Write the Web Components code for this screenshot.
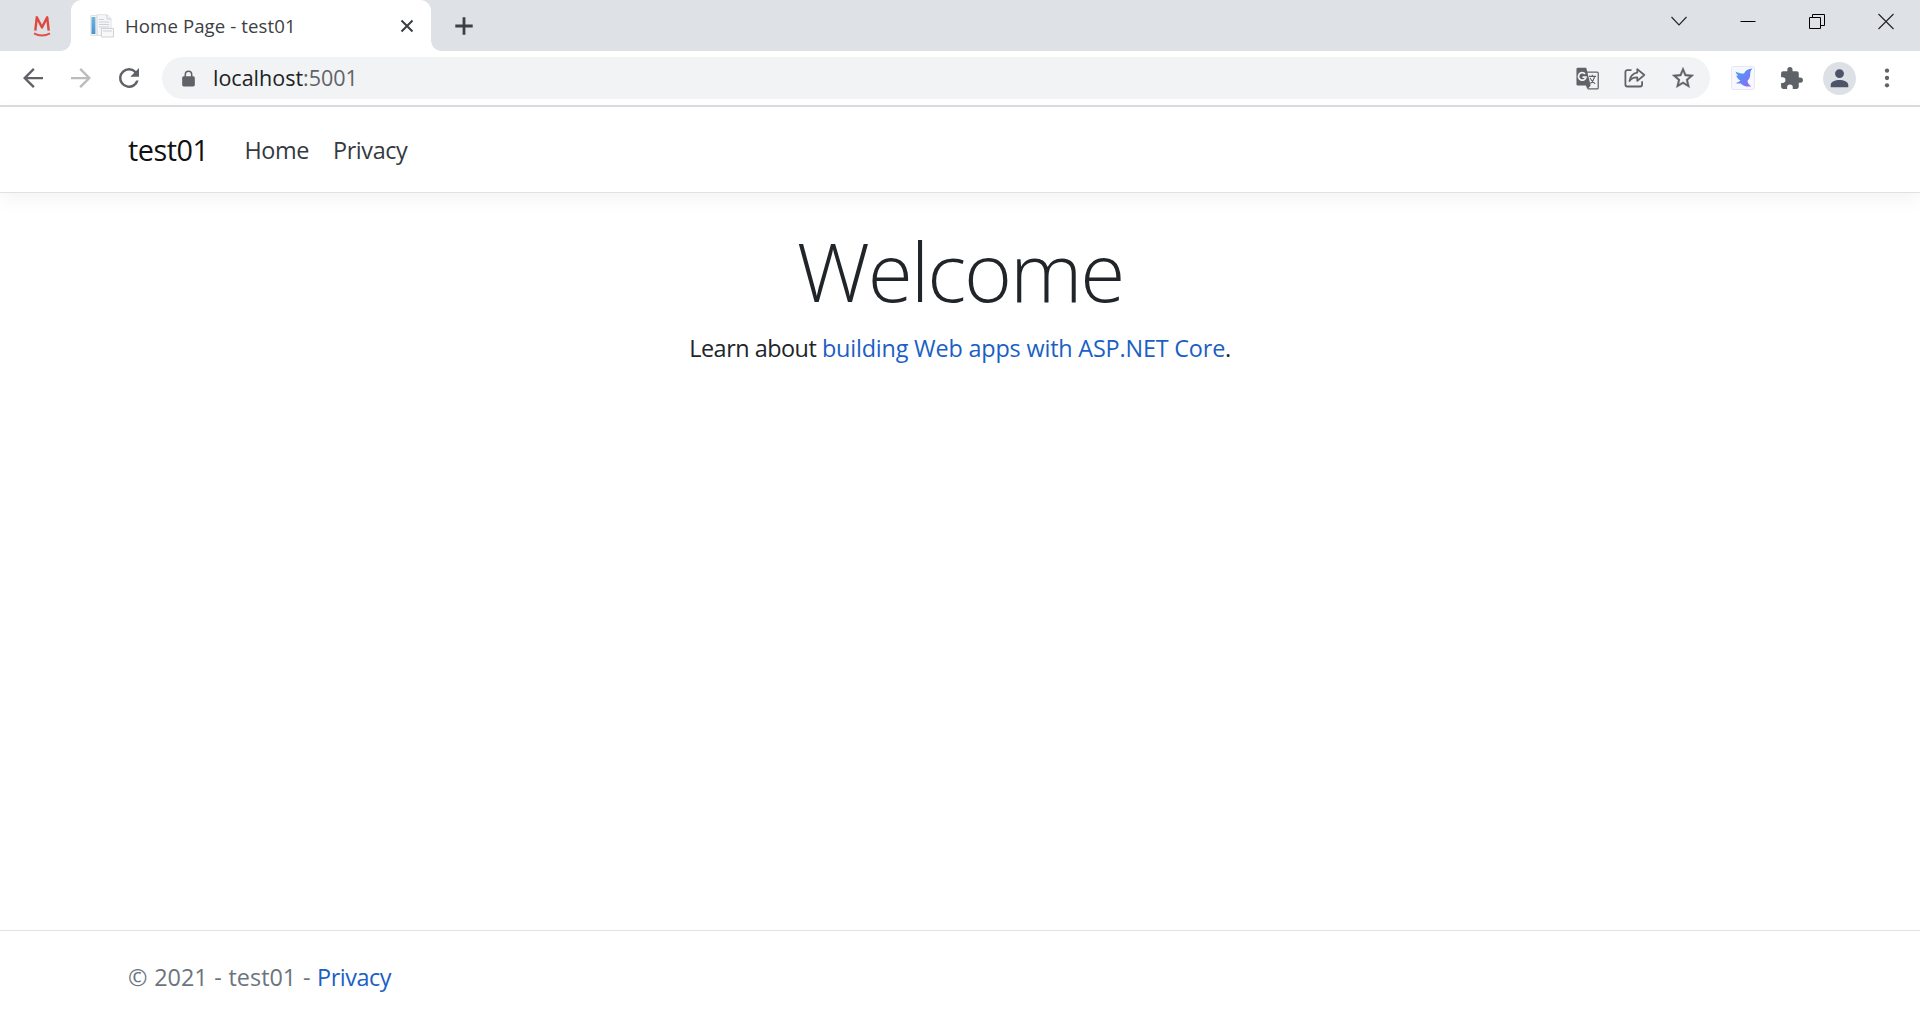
<!DOCTYPE html>
<html lang="en">
<head>
  <meta charset="utf-8">
  <title>Home Page - test01</title>
  <style>
    body {
      margin: 0;
      height: 1020px;
      overflow: hidden;
      display: flex;
      flex-direction: column;
      background: #fff;
      font-family: "Open Sans", "Noto Sans", sans-serif;
      color: #212529;
    }
  </style>
</head>
<body>
  <tab-strip>
    <browser-tab>Home Page - test01</browser-tab>
  </tab-strip>
  <tool-bar>
    <span slot="host">localhost</span>
    <span slot="port">:5001</span>
  </tool-bar>
  <site-header brand="test01">
    <nav-link>Home</nav-link>
    <nav-link>Privacy</nav-link>
  </site-header>
  <welcome-panel heading="Welcome">Learn about <text-link>building Web apps with ASP.NET Core</text-link>.</welcome-panel>
  <site-footer>© 2021 - test01 - <text-link tight>Privacy</text-link></site-footer>

  <script>
    const ICONS = {
      back: '<path d="M20 11.1H7.6l5.7-5.7L12 4l-8 8 8 8 1.4-1.4-5.8-5.7H20z"/>',
      forward: '<path d="M4 11.1h12.4l-5.7-5.7L12 4l8 8-8 8-1.4-1.4 5.8-5.7H4z"/>',
      reload: '<path d="M17.65 6.35A7.96 7.96 0 0 0 12 4a8 8 0 1 0 7.73 10h-2.08A6 6 0 1 1 12 6c1.66 0 3.14.69 4.22 1.78L13 11h7V4z"/>',
      lock: '<path d="M18 9h-1V7A5 5 0 0 0 7 7v2H6a2 2 0 0 0-2 2v9a2 2 0 0 0 2 2h12a2 2 0 0 0 2-2v-9a2 2 0 0 0-2-2zM8.9 9V7a3.1 3.1 0 0 1 6.2 0v2z"/>',
      translate: '<path d="M11 5.8H21.3a1 1 0 0 1 1 1V21a1 1 0 0 1-1 1H12.5" fill="none" stroke="currentColor" stroke-width="1.2"/><path d="M2.6 1.6h8.2l4.2 17H2.6A1.2 1.2 0 0 1 1.4 17.4V2.8A1.2 1.2 0 0 1 2.6 1.6zM10.4 18.6H15L12 22.4z"/><path d="M9.6 7.6A3.6 3.6 0 1 0 10.5 10.6H7.2" fill="none" stroke="#f1f3f4" stroke-width="1.7"/><path d="M13.4 10h6.8M16.6 8.4V10M18.8 10.2c-.6 3-2.2 5.2-4 6.6M14.4 11.4c1 2.3 2.8 4.3 5 5.6" fill="none" stroke="currentColor" stroke-width="1.1"/>',
      share: '<path d="M8.5 4.1H4.4a2 2 0 0 0-2 2v12.4a2 2 0 0 0 2 2h12.7a2 2 0 0 0 2-2v-3.2" fill="none" stroke="currentColor" stroke-width="1.8"/><path d="M14.3 3.1l7 5.9-7 5.9v-3.5c-3.4-.1-5.9 1-7.8 3.7.6-4.2 2.9-7.6 7.8-8.4z" fill="none" stroke="currentColor" stroke-width="1.8" stroke-linejoin="round"/>',
      star: '<path stroke="currentColor" stroke-width=".3" d="M22 9.24l-7.19-.62L12 2 9.19 8.63 2 9.24l5.46 4.73L5.82 21 12 17.27 18.18 21l-1.63-7.03zM12 15.4l-3.76 2.27 1-4.28-3.32-2.88 4.38-.38L12 6.1l1.71 4.04 4.38.38-3.32 2.88 1 4.28z"/>',
      puzzle: '<path d="M20.5 11H19V7a2 2 0 0 0-2-2h-4V3.5a2.5 2.5 0 0 0-5 0V5H4a2 2 0 0 0-2 2v3.8h1.5a2.7 2.7 0 0 1 0 5.4H2V20a2 2 0 0 0 2 2h3.8v-1.5a2.7 2.7 0 0 1 5.4 0V22H17a2 2 0 0 0 2-2v-4h1.5a2.5 2.5 0 0 0 0-5z"/>',
      bird: '<defs><linearGradient id="g" x1="0" y1="0" x2="1" y2="1"><stop offset="0" stop-color="#45a6f8"/><stop offset=".5" stop-color="#6785f5"/><stop offset="1" stop-color="#9a63f2"/></linearGradient></defs><rect x=".5" y=".5" width="23" height="23" rx="2" fill="#f7f7fe" stroke="#e6e7f6"/><path fill="url(#g)" d="M4.6 5.4C7.5 7 10.4 7.7 13 7.5 14.2 4.6 17 2.8 21.4 2.6 19.6 4.4 19.2 6.4 19.2 8.6c0 2.8-1 4.8-2.6 6-.3 2 1 4.3 3.6 5.8-4.6.6-8.2-.4-10.8-3.2-1.4.4-3 .4-4.6-.3 2.2-.4 3.6-1.2 4.6-2.4C7 13 5.8 11.2 5.2 9.4 6 9.6 6.8 9.6 7.4 9.4 6 8.4 4.8 7.2 4.6 5.4z"/>',
      profile: '<circle cx="12" cy="12" r="12" fill="#dde1e6"/><path fill="#4d5469" d="M12 5.2a3.25 3.25 0 1 1 0 6.5 3.25 3.25 0 0 1 0-6.5zM5.6 18.3v-1.5c0-2.5 3.4-3.7 6.4-3.7s6.4 1.2 6.4 3.7v1.5z"/>',
      dots: '<circle cx="12" cy="5.7" r="1.85"/><circle cx="12" cy="12" r="1.85"/><circle cx="12" cy="18.3" r="1.85"/>',
      close: '<path d="M6.5 6.5l11 11m0-11l-11 11" fill="none" stroke="currentColor" stroke-width="2.1"/>',
      plus: '<path d="M12 3.3v17.4M3.3 12h17.4" fill="none" stroke="currentColor" stroke-width="2.8"/>',
      chevron: '<path d="M4.5 8l7.5 8 7.5-8" fill="none" stroke="currentColor" stroke-width="1.1"/>',
      minimize: '<path d="M4.5 12.5h15" fill="none" stroke="#000" stroke-width="1"/>',
      restore: '<path d="M4.5 8.5h11v11h-11zM7.5 8.5v-3h12v11h-4" fill="none" stroke="#000" stroke-width="1"/>',
      exit: '<path d="M4.5 5l15 15m0-15l-15 15" fill="none" stroke="currentColor" stroke-width="1.1"/>',
      smile: '<path d="M5.3 16.6L6.8 3.2 12 13.4l5.2-10.2 1.5 13.4" fill="none" stroke="#e0483f" stroke-width="2.4" stroke-linejoin="round"/><path d="M4 19.4q8 4.2 16 0" fill="none" stroke="#e0504a" stroke-width="1.8"/>',
      page: '<defs><linearGradient id="b" x2="0" y2="1"><stop stop-color="#72b5df"/><stop offset="1" stop-color="#4a94cc"/></linearGradient></defs><path fill="#f5f6f7" stroke="#dfe2e4" d="M.8 1.5H7v20H.8zM7 .7h10.2L21 4.5v17H7z"/><path fill="url(#b)" d="M1.5 3H5.4v17H1.5z"/><path fill="none" stroke="#c3c7ca" stroke-width=".8" d="M9 5.5h5M9 8h10M9 10.5h10M9 13h10M17 1v4h4"/><path fill="#f8f8f8" stroke="#c9cdd0" stroke-width=".9" d="M11.5 14.5h12v8.5h-12z"/><path stroke="#c9cdd0" d="M13 17h9"/>'
    };

    class BrowserIcon extends HTMLElement {
      constructor() {
        super();
        this.attachShadow({ mode: "open" });
      }

      connectedCallback() {
        const size = this.getAttribute("size") || 24;
        this.shadowRoot.innerHTML = `
          <style>
            :host { display: block; flex: none; width: ${size}px; height: ${size}px; }
            svg { display: block; }
          </style>
          <svg width="${size}" height="${size}" viewBox="0 0 24 24" fill="currentColor">${ICONS[this.getAttribute("name")]}</svg>
        `;
      }
    }

    class TabStrip extends HTMLElement {
      constructor() {
        super();
        this.attachShadow({ mode: "open" });
      }

      connectedCallback() {
        this.shadowRoot.innerHTML = `
          <style>
            :host { display: flex; height: 51px; flex: none; background: #dee1e6; color: #3c4043; }
            .pinned { width: 71px; box-sizing: border-box; padding: 14px 0 0 30px; }
            .add { padding: 13.5px 0 0 20.5px; }
            .window { margin-left: auto; display: flex; gap: 45px; padding: 9px 22px 0 0; color: #222; }
          </style>
          <div class="pinned"><browser-icon name="smile" size="24"></browser-icon></div>
          <slot></slot>
          <div class="add"><browser-icon name="plus" size="24"></browser-icon></div>
          <div class="window">
            <browser-icon name="chevron"></browser-icon>
            <browser-icon name="minimize"></browser-icon>
            <browser-icon name="restore"></browser-icon>
            <browser-icon name="exit"></browser-icon>
          </div>
        `;
      }
    }

    class BrowserTab extends HTMLElement {
      constructor() {
        super();
        this.attachShadow({ mode: "open" });
      }

      connectedCallback() {
        this.shadowRoot.innerHTML = `
          <style>
            :host {
              display: flex;
              align-items: center;
              position: relative;
              box-sizing: border-box;
              width: 360px;
              height: 51px;
              padding: 0 12.5px 0 19px;
              background: #fff;
              border-radius: 11px 11px 0 0;
            }
            /* curved feet of the active tab */
            :host::before, :host::after {
              content: "";
              position: absolute;
              bottom: 0;
              width: 10px;
              height: 10px;
            }
            :host::before { left: -10px; background: radial-gradient(circle at 0 0, transparent 9.5px, #fff 10px); }
            :host::after { right: -10px; background: radial-gradient(circle at 100% 0, transparent 9.5px, #fff 10px); }
            .title { flex: 1; margin-left: 11px; font-size: 18.6px; line-height: 26px; white-space: nowrap; letter-spacing: .1px; }
          </style>
          <browser-icon name="page" size="24"></browser-icon>
          <span class="title"><slot></slot></span>
          <browser-icon name="close" size="24"></browser-icon>
        `;
      }
    }

    class ToolBar extends HTMLElement {
      constructor() {
        super();
        this.attachShadow({ mode: "open" });
      }

      connectedCallback() {
        this.shadowRoot.innerHTML = `
          <style>
            :host {
              display: flex;
              align-items: center;
              box-sizing: border-box;
              flex: none;
              height: 56px;
              padding: 0 18px;
              border-bottom: 2px solid #dadce0;
              color: #5f6368;
            }
            .nav { display: flex; gap: 18px; width: 144px; }
            .nav :nth-child(2) { color: #babcbe; }
            .address {
              flex: none;
              display: flex;
              align-items: center;
              box-sizing: border-box;
              width: 1548px;
              height: 42px;
              padding: 0 14px 0 17px;
              border-radius: 21px;
              background: #f1f3f4;
            }
            .url { flex: 1; margin-left: 15px; font-size: 21.5px; line-height: 30px; white-space: nowrap; }
            .host { color: #202124; }
            .actions { display: flex; align-items: center; gap: 23px; }
            .extensions { display: flex; align-items: center; padding-left: 21px; }
            .extensions :nth-child(2) { margin-left: 24px; }
            .extensions :nth-child(3) { margin-left: 19px; }
            .extensions :nth-child(4) { margin-left: 17px; }
          </style>
          <div class="nav">
            <browser-icon name="back" size="30"></browser-icon>
            <browser-icon name="forward" size="30"></browser-icon>
            <browser-icon name="reload" size="30"></browser-icon>
          </div>
          <div class="address">
            <browser-icon name="lock" size="19"></browser-icon>
            <div class="url"><span class="host"><slot name="host"></slot></span><slot name="port"></slot></div>
            <div class="actions">
              <browser-icon name="translate" size="25"></browser-icon>
              <browser-icon name="share"></browser-icon>
              <browser-icon name="star" size="26"></browser-icon>
            </div>
          </div>
          <div class="extensions">
            <browser-icon name="bird"></browser-icon>
            <browser-icon name="puzzle" size="25"></browser-icon>
            <browser-icon name="profile" size="33"></browser-icon>
            <browser-icon name="dots" size="28"></browser-icon>
          </div>
        `;
      }
    }

    class SiteHeader extends HTMLElement {
      constructor() {
        super();
        this.attachShadow({ mode: "open" });
      }

      connectedCallback() {
        this.shadowRoot.innerHTML = `
          <style>
            :host {
              display: flex;
              align-items: flex-start;
              box-sizing: border-box;
              flex: none;
              height: 86px;
              padding: 23px 128px 0;
              border-bottom: 1px solid #dee2e6;
              box-shadow: 0 6px 18px rgba(0, 0, 0, .05);
            }
            .brand { width: 116.5px; font-size: 28.8px; line-height: 40px; letter-spacing: -.5px; color: #111; }
            nav { display: flex; gap: 24px; padding-top: 2px; }
          </style>
          <span class="brand">${this.getAttribute("brand")}</span>
          <nav><slot></slot></nav>
        `;
      }
    }

    class NavLink extends HTMLElement {
      constructor() {
        super();
        this.attachShadow({ mode: "open" });
      }

      connectedCallback() {
        this.shadowRoot.innerHTML = `
          <style>
            :host { display: block; font-size: 23.4px; line-height: 36px; letter-spacing: -.4px; color: #343a40; }
          </style>
          <slot></slot>
        `;
      }
    }

    class TextLink extends HTMLElement {
      constructor() {
        super();
        this.attachShadow({ mode: "open" });
      }

      connectedCallback() {
        // no whitespace around the slot, the link sits inside a sentence
        this.shadowRoot.innerHTML = `<style>
            :host { display: inline; color: #1b5fc4; letter-spacing: -.18px; }
            :host([tight]) { letter-spacing: -.45px; }
          </style><slot></slot>`;
      }
    }

    class WelcomePanel extends HTMLElement {
      constructor() {
        super();
        this.attachShadow({ mode: "open" });
      }

      connectedCallback() {
        this.shadowRoot.innerHTML = `
          <style>
            :host { display: block; flex: 1; padding-top: 22px; text-align: center; }
            h1 { margin: 0; font-size: 82px; line-height: 110px; font-weight: 300; letter-spacing: -2.1px; }
            p { margin: 5px 0 0; font-size: 23.4px; line-height: 36px; letter-spacing: -.48px; }
          </style>
          <h1>${this.getAttribute("heading")}</h1>
          <p><slot></slot></p>
        `;
      }
    }

    class SiteFooter extends HTMLElement {
      constructor() {
        super();
        this.attachShadow({ mode: "open" });
      }

      connectedCallback() {
        this.shadowRoot.innerHTML = `
          <style>
            :host {
              display: block;
              box-sizing: border-box;
              flex: none;
              height: 90px;
              padding: 28px 128px 0;
              border-top: 1px solid #dee2e6;
              font-size: 23.4px;
              line-height: 36px;
              word-spacing: .6px;
              color: #6c757d;
            }
          </style>
          <slot></slot>
        `;
      }
    }

    customElements.define("browser-icon", BrowserIcon);
    customElements.define("browser-tab", BrowserTab);
    customElements.define("tab-strip", TabStrip);
    customElements.define("tool-bar", ToolBar);
    customElements.define("nav-link", NavLink);
    customElements.define("text-link", TextLink);
    customElements.define("site-header", SiteHeader);
    customElements.define("welcome-panel", WelcomePanel);
    customElements.define("site-footer", SiteFooter);
  </script>
</body>
</html>
